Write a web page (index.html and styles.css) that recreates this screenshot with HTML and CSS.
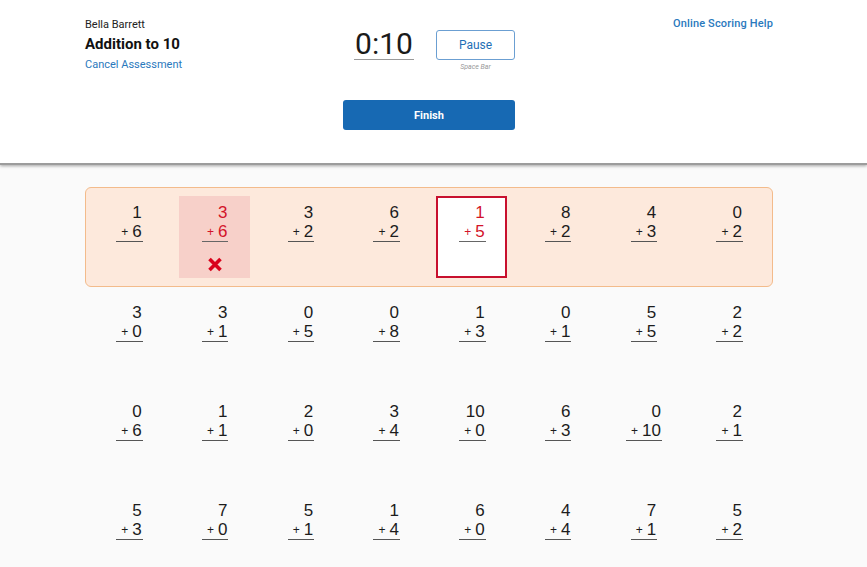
FILE: index.html
```html
<!DOCTYPE html>
<html lang="en">
<head>
<meta charset="utf-8">
<title>Addition to 10</title>
<link rel="stylesheet" href="styles.css">
</head>
<body>
<header class="header">
  <div class="header-inner">
    <div class="info">
      <div class="student">Bella Barrett</div>
      <div class="title">Addition to 10</div>
      <a class="link cancel" href="#">Cancel Assessment</a>
    </div>
    <div class="controls">
      <div class="timer-row">
        <div class="timer">0:10</div>
        <div class="pause-wrap">
          <button class="pause">Pause</button>
          <div class="hint">Space Bar</div>
        </div>
      </div>
      <button class="finish">Finish</button>
    </div>
    <div class="help">
      <a class="link help-link" href="#">Online Scoring Help</a>
    </div>
  </div>
</header>
<main class="main">
  <div class="sheet">
    <div class="row active">
      <div class="cell"><div class="prob"><div>1</div><div class="bottom"><span class="plus">+</span>6</div></div></div>
      <div class="cell wrong"><div class="prob"><div>3</div><div class="bottom"><span class="plus">+</span>6</div></div>
        <svg class="xmark" width="16" height="15" viewBox="0 0 16 15"><path d="M2.5 2 L13.5 13 M13.5 2 L2.5 13" stroke="#d9021b" stroke-width="3.6" stroke-linecap="butt"/></svg>
      </div>
      <div class="cell"><div class="prob"><div>3</div><div class="bottom"><span class="plus">+</span>2</div></div></div>
      <div class="cell"><div class="prob"><div>6</div><div class="bottom"><span class="plus">+</span>2</div></div></div>
      <div class="cell current"><div class="prob"><div>1</div><div class="bottom"><span class="plus">+</span>5</div></div></div>
      <div class="cell"><div class="prob"><div>8</div><div class="bottom"><span class="plus">+</span>2</div></div></div>
      <div class="cell"><div class="prob"><div>4</div><div class="bottom"><span class="plus">+</span>3</div></div></div>
      <div class="cell"><div class="prob"><div>0</div><div class="bottom"><span class="plus">+</span>2</div></div></div>
    </div>
    <div class="row">
      <div class="cell"><div class="prob"><div>3</div><div class="bottom"><span class="plus">+</span>0</div></div></div>
      <div class="cell"><div class="prob"><div>3</div><div class="bottom"><span class="plus">+</span>1</div></div></div>
      <div class="cell"><div class="prob"><div>0</div><div class="bottom"><span class="plus">+</span>5</div></div></div>
      <div class="cell"><div class="prob"><div>0</div><div class="bottom"><span class="plus">+</span>8</div></div></div>
      <div class="cell"><div class="prob"><div>1</div><div class="bottom"><span class="plus">+</span>3</div></div></div>
      <div class="cell"><div class="prob"><div>0</div><div class="bottom"><span class="plus">+</span>1</div></div></div>
      <div class="cell"><div class="prob"><div>5</div><div class="bottom"><span class="plus">+</span>5</div></div></div>
      <div class="cell"><div class="prob"><div>2</div><div class="bottom"><span class="plus">+</span>2</div></div></div>
    </div>
    <div class="row">
      <div class="cell"><div class="prob"><div>0</div><div class="bottom"><span class="plus">+</span>6</div></div></div>
      <div class="cell"><div class="prob"><div>1</div><div class="bottom"><span class="plus">+</span>1</div></div></div>
      <div class="cell"><div class="prob"><div>2</div><div class="bottom"><span class="plus">+</span>0</div></div></div>
      <div class="cell"><div class="prob"><div>3</div><div class="bottom"><span class="plus">+</span>4</div></div></div>
      <div class="cell"><div class="prob"><div>10</div><div class="bottom"><span class="plus">+</span>0</div></div></div>
      <div class="cell"><div class="prob"><div>6</div><div class="bottom"><span class="plus">+</span>3</div></div></div>
      <div class="cell"><div class="prob"><div>0</div><div class="bottom"><span class="plus">+</span>10</div></div></div>
      <div class="cell"><div class="prob"><div>2</div><div class="bottom"><span class="plus">+</span>1</div></div></div>
    </div>
    <div class="row">
      <div class="cell"><div class="prob"><div>5</div><div class="bottom"><span class="plus">+</span>3</div></div></div>
      <div class="cell"><div class="prob"><div>7</div><div class="bottom"><span class="plus">+</span>0</div></div></div>
      <div class="cell"><div class="prob"><div>5</div><div class="bottom"><span class="plus">+</span>1</div></div></div>
      <div class="cell"><div class="prob"><div>1</div><div class="bottom"><span class="plus">+</span>4</div></div></div>
      <div class="cell"><div class="prob"><div>6</div><div class="bottom"><span class="plus">+</span>0</div></div></div>
      <div class="cell"><div class="prob"><div>4</div><div class="bottom"><span class="plus">+</span>4</div></div></div>
      <div class="cell"><div class="prob"><div>7</div><div class="bottom"><span class="plus">+</span>1</div></div></div>
      <div class="cell"><div class="prob"><div>5</div><div class="bottom"><span class="plus">+</span>2</div></div></div>
    </div>
  </div>
</main>
</body>
</html>
```

FILE: styles.css
```css
* { box-sizing: border-box; }

body {
  margin: 0;
  background: #fafafa;
  font-family: Roboto, "Liberation Sans", sans-serif;
  color: #222;
}

.header {
  background: #fff;
  height: 165px;
  border-bottom: 2px solid #9c9c9c;
  box-shadow: 0 1px 3px rgba(0, 0, 0, 0.35);
}

.header-inner {
  margin-left: 85px;
  width: 688px;
  display: grid;
  grid-template-columns: 1fr 172px 1fr;
  padding-top: 16px;
}

.info {
  padding-top: 2px;
}

.student {
  font-size: 11px;
  line-height: 13px;
  color: #222;
}

.title {
  margin-top: 4px;
  font-size: 15px;
  line-height: 18px;
  font-weight: 700;
  color: #111;
}

.link {
  color: #2a79bd;
  text-decoration: none;
  font-size: 11px;
  line-height: 13px;
}

.cancel {
  display: block;
  margin-top: 5px;
}

.controls {
  display: flex;
  flex-direction: column;
  padding-top: 13px;
}

.timer-row {
  display: flex;
  justify-content: flex-end;
  gap: 22px;
}

.timer {
  font-size: 30px;
  line-height: 30px;
  width: 60px;
  text-align: center;
  color: #1a1a1a;
  border-bottom: 1px solid #9a9a9a;
  height: 31px;
}

.pause-wrap {
  display: flex;
  flex-direction: column;
  align-items: center;
  margin-top: 1px;
}

.pause {
  width: 79px;
  height: 30px;
  background: #fff;
  border: 1px solid #6b9fd2;
  border-radius: 3px;
  color: #1f6fb6;
  font-family: Roboto, "Liberation Sans", sans-serif;
  font-size: 12px;
  padding: 0;
}

.hint {
  margin-top: 3px;
  font-size: 7px;
  line-height: 9px;
  font-style: italic;
  color: #999;
}

.finish {
  margin-top: 28px;
  width: 172px;
  height: 30px;
  background: #1769b3;
  border: none;
  border-radius: 3px;
  color: #fff;
  font-family: Roboto, "Liberation Sans", sans-serif;
  font-size: 11px;
  font-weight: 700;
  padding: 0;
}

.help {
  text-align: right;
  font-size: 11px;
  line-height: 13px;
  padding-top: 1px;
}

.help-link {
  font-weight: 500;
  letter-spacing: 0.15px;
}

.main {
  padding-top: 22px;
}

.sheet {
  margin-left: 85px;
  width: 688px;
}

.row {
  display: grid;
  grid-template-columns: repeat(8, 1fr);
  border: 1px solid transparent;
  border-radius: 6px;
  padding: 8px 0;
  height: 99px;
}

.row.active {
  height: 100px;
  background: #fde9dc;
  border-color: #f3bb8b;
}

.cell {
  justify-self: center;
  width: 71px;
  height: 82px;
  padding-top: 7px;
  display: flex;
  flex-direction: column;
  align-items: center;
}

.prob {
  display: inline-block;
  text-align: right;
  font-family: "Liberation Sans", Arial, sans-serif;
  font-size: 17px;
  line-height: 19px;
  color: #1c1c1c;
  padding: 0 1px 0 5px;
  margin-left: 1px;
}

.bottom {
  border-bottom: 1px solid #555;
  margin-left: -5px;
  margin-right: -1px;
  padding-left: 5px;
  padding-right: 1px;
}

.plus {
  font-size: 12px;
  line-height: 12px;
  margin-right: 4px;
  vertical-align: 1px;
}

.cell.wrong {
  background: #f7d0c9;
}

.cell.wrong .prob,
.cell.current .prob {
  color: #d3132a;
}

.cell.wrong .bottom,
.cell.current .bottom {
  border-bottom-color: #666;
}

.cell.current {
  background: #fff;
  border: 2px solid #c8102e;
  padding-top: 5px;
}

.xmark {
  margin-top: 15px;
}
```
